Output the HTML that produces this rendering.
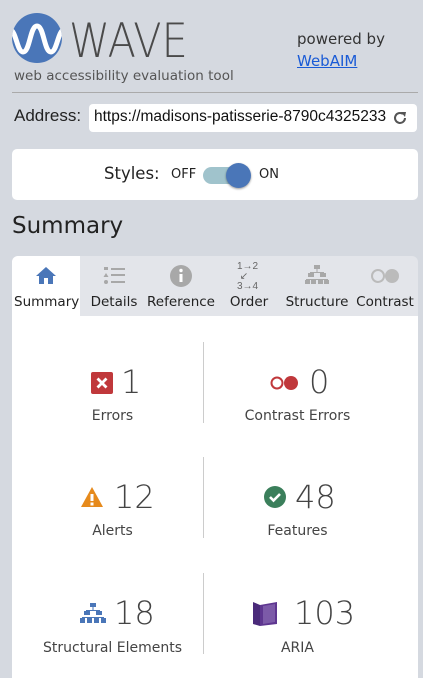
<!DOCTYPE html>
<html><head><meta charset="utf-8"><style>
*{margin:0;padding:0;box-sizing:border-box}
body{width:423px;height:678px;background:#d5d9e0;font-family:"DejaVu Sans","Liberation Sans",sans-serif;color:#333;position:relative;overflow:hidden}
.a{position:absolute;white-space:nowrap}
.num{font-size:32px;color:#444;font-weight:300}
.lab{font-size:14px;color:#444;width:191px;text-align:center}
.tl{font-size:13.5px;color:#222;text-align:center;top:294px}
.div{position:absolute;left:203px;width:1px;background:#ccc}
</style></head><body>
<svg class="a" style="left:0;top:0" width="80" height="70">
<defs><clipPath id="c"><circle cx="37" cy="38" r="25"/></clipPath></defs>
<circle cx="37" cy="38" r="25" fill="#4a76b8"/>
<path clip-path="url(#c)" d="M10 30 C16 30 17 52 23 52 C30 52 30 26 37 26 C44 26 44 52 51 52 C57 52 58 30 64 30" stroke="#fff" stroke-width="5" fill="none"/>
</svg>
<div class="a" style="left:69px;top:14px;font-size:47px;font-weight:200;color:#4a4a4a;letter-spacing:0;transform:scaleX(0.88);transform-origin:left top">WAVE</div>
<div class="a" style="left:14px;top:68px;font-size:13.5px;color:#555">web accessibility evaluation tool</div>
<div class="a" style="left:297px;top:30px;font-size:15px;color:#333">powered by</div>
<div class="a" style="left:297px;top:52px;font-size:15px;color:#1a5bd6;text-decoration:underline">WebAIM</div>
<div class="a" style="left:12px;top:92px;width:406px;height:1px;background:#aaa"></div>
<div class="a" style="left:14px;top:106px;font-size:17px;color:#222;font-family:'Liberation Sans',sans-serif">Address:</div>
<div class="a" style="left:89px;top:104px;width:328px;height:28px;background:#fff;border-radius:4px"></div>
<div class="a" style="left:94px;top:108px;font-size:15.5px;color:#111;font-family:'Liberation Sans',sans-serif">https://madisons-patisserie-8790c4325233</div>
<svg class="a" style="left:392px;top:110px" width="16" height="16" viewBox="0 0 16 16"><path d="M13 8 A5 5 0 1 1 11 4" stroke="#555" stroke-width="2" fill="none"/><path d="M9 2 L14 2 L13 7 Z" fill="#555"/></svg>
<div class="a" style="left:12px;top:149px;width:406px;height:51px;background:#fff;border-radius:5px"></div>
<div class="a" style="left:104px;top:164px;font-size:16.5px;color:#222">Styles:</div>
<div class="a" style="left:171px;top:167px;font-size:13px;color:#222">OFF</div>
<div class="a" style="left:203px;top:167px;width:44px;height:17px;background:#a0c3cc;border-radius:9px"></div>
<div class="a" style="left:226px;top:163px;width:25px;height:25px;background:#4a76b8;border-radius:50%;box-shadow:0 1px 2px rgba(0,0,0,.4)"></div>
<div class="a" style="left:259px;top:167px;font-size:13px;color:#222">ON</div>
<div class="a" style="left:12px;top:213px;font-size:23px;color:#222">Summary</div>
<div class="a" style="left:12px;top:256px;width:406px;height:60px;background:#e3e5ea;border-radius:6px 6px 0 0"></div>
<div class="a" style="left:12px;top:256px;width:68px;height:62px;background:#fff;border-radius:6px 0 0 0"></div>
<div class="a" style="left:12px;top:316px;width:406px;height:362px;background:#fff"></div>
<svg class="a" style="left:34px;top:264px" width="24" height="22"><path d="M12 3 L2 12 H5 V20 H10 V14 H14 V20 H19 V12 H22 Z" fill="#4a76b8"/></svg>
<svg class="a" style="left:102px;top:264px" width="24" height="22" fill="#a8a8a8"><rect x="2" y="3" width="4" height="3"/><rect x="9" y="4" width="14" height="2"/><path d="M4 9 L6.5 13 H1.5Z"/><rect x="9" y="10" width="14" height="2"/><circle cx="4" cy="18" r="2"/><rect x="9" y="17" width="14" height="2"/></svg>
<svg class="a" style="left:169px;top:264px" width="24" height="24"><circle cx="12" cy="12" r="11" fill="#a8a8a8"/><rect x="10.5" y="10" width="3" height="8" fill="#fff"/><circle cx="12" cy="6.5" r="1.7" fill="#fff"/></svg>
<div class="a" style="left:237px;top:262px;font-size:10px;color:#666;line-height:10px;font-family:'Liberation Sans',sans-serif">1→2<br>&nbsp;↙<br>3→4</div>
<svg class="a" style="left:305px;top:264px" width="24" height="22" fill="#a8a8a8"><rect x="9" y="1" width="6" height="4"/><rect x="11.5" y="5" width="1" height="3"/><rect x="5" y="8" width="14" height="1"/><rect x="3" y="9" width="6" height="4"/><rect x="15" y="9" width="6" height="4"/><rect x="1" y="15" width="22" height="1"/><rect x="0" y="16" width="5" height="4"/><rect x="6" y="16" width="5" height="4"/><rect x="13" y="16" width="5" height="4"/><rect x="19" y="16" width="5" height="4"/></svg>
<svg class="a" style="left:370px;top:267px" width="32" height="18"><circle cx="8" cy="9" r="6" stroke="#bbb" stroke-width="2" fill="none"/><circle cx="22" cy="9" r="7" fill="#bbb"/></svg>
<div class="a tl" style="left:14px;width:64px">Summary</div>
<div class="a tl" style="left:84px;width:60px">Details</div>
<div class="a tl" style="left:146px;width:70px">Reference</div>
<div class="a tl" style="left:220px;width:58px">Order</div>
<div class="a tl" style="left:282px;width:70px">Structure</div>
<div class="a tl" style="left:352px;width:66px">Contrast</div>
<div class="div" style="top:342px;height:81px"></div>
<div class="div" style="top:457px;height:81px"></div>
<div class="div" style="top:573px;height:81px"></div>
<svg class="a" style="left:91px;top:372px" width="22" height="22"><rect width="22" height="22" rx="2" fill="#c0383b"/><path d="M6.5 6.5 L15.5 15.5 M15.5 6.5 L6.5 15.5" stroke="#fff" stroke-width="2.8"/></svg>
<div class="a num" style="left:121px;top:363px">1</div>
<div class="a lab" style="left:17px;top:408px">Errors</div>
<svg class="a" style="left:270px;top:375px" width="30" height="16"><circle cx="7" cy="8" r="5.5" stroke="#c0383b" stroke-width="2" fill="none"/><circle cx="21" cy="8" r="7" fill="#c0383b"/></svg>
<div class="a num" style="left:309px;top:363px">0</div>
<div class="a lab" style="left:202px;top:408px">Contrast Errors</div>
<svg class="a" style="left:80px;top:486px" width="24" height="22"><path d="M12 1 L23 21 H1 Z" fill="#e68a1c"/><rect x="10.5" y="8" width="3" height="7" fill="#fff"/><rect x="10.5" y="16.5" width="3" height="3" fill="#fff"/></svg>
<div class="a num" style="left:114px;top:478px">12</div>
<div class="a lab" style="left:17px;top:523px">Alerts</div>
<svg class="a" style="left:264px;top:486px" width="22" height="22"><circle cx="11" cy="11" r="11" fill="#3b7f5b"/><path d="M6 11 L9.5 14.5 L16 8" stroke="#fff" stroke-width="2.6" fill="none"/></svg>
<div class="a num" style="left:295px;top:478px">48</div>
<div class="a lab" style="left:202px;top:523px">Features</div>
<svg class="a" style="left:80px;top:602px" width="26" height="22" fill="#4a76b8"><rect x="10" y="1" width="6" height="4"/><rect x="12.5" y="5" width="1" height="3"/><rect x="6" y="8" width="14" height="1"/><rect x="4" y="9" width="6" height="4"/><rect x="16" y="9" width="6" height="4"/><rect x="2" y="15" width="22" height="1"/><rect x="0" y="16" width="5" height="5"/><rect x="7" y="16" width="5" height="5"/><rect x="14" y="16" width="5" height="5"/><rect x="21" y="16" width="5" height="5"/></svg>
<div class="a num" style="left:114px;top:594px">18</div>
<div class="a lab" style="left:17px;top:640px">Structural Elements</div>
<svg class="a" style="left:251px;top:600px" width="28" height="28"><path d="M2 2 L9 5 V26 L2 24 Z" fill="#4a2a7a"/><path d="M9 5 L26 2 V24 L9 26 Z" fill="#5e3690"/><path d="M12 6 L24 4 V22 L12 24 Z" fill="#7c5aa8"/></svg>
<div class="a num" style="left:294px;top:594px">103</div>
<div class="a lab" style="left:202px;top:640px">ARIA</div>
</body></html>
